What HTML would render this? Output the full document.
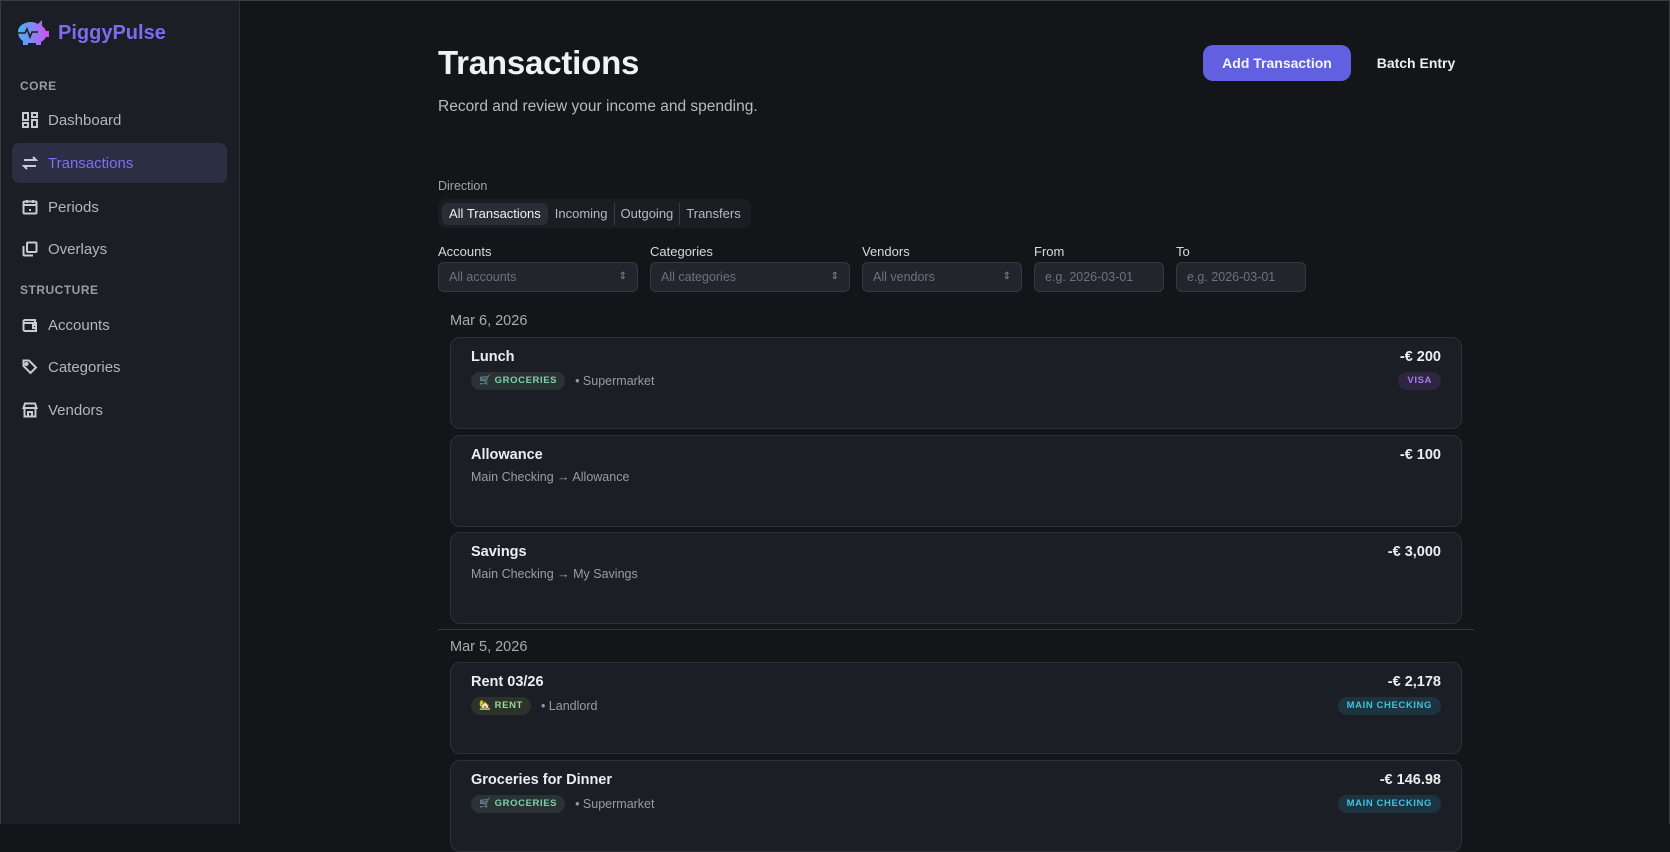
<!DOCTYPE html>
<html><head><meta charset="utf-8"><style>
*{box-sizing:border-box;margin:0;padding:0}
body{width:1670px;height:824px;overflow:hidden;background:#141519;font-family:"Liberation Sans",sans-serif;color:#e6e7ea;position:relative}
.frame{position:absolute;inset:0;border:1px solid #3a3c42;border-bottom:none;pointer-events:none}
.side{position:absolute;left:0;top:0;width:240px;height:824px;background:#1c1e25;border-right:1px solid #2c2e35}
.logo{position:absolute;left:14px;top:18px;display:flex;align-items:center;gap:8px;font-weight:bold;font-size:20px;color:#7b6cf0}
.sec{position:absolute;left:20px;font-size:12px;font-weight:bold;color:#9a9ca4;letter-spacing:.5px}
.nav{position:absolute;left:12px;width:215px;height:40px;display:flex;align-items:center;padding-left:10px;gap:10px;font-size:15px;color:#b4b6bd;border-radius:7px}
.nav.act{background:#2c2e44;color:#7d72ee}
.nav svg{width:16px;height:16px;stroke:#c9cbd1;fill:none;stroke-width:2}
h1{position:absolute;left:438px;top:44px;font-size:33px;font-weight:bold;color:#f0f1f3;letter-spacing:-.2px}
.sub{position:absolute;left:438px;top:98px;font-size:15.5px;color:#b7b9c0}
.btn{position:absolute;top:45px;height:36px;border-radius:10px;font-size:14px;font-weight:bold;display:flex;align-items:center;justify-content:center}
.lbl{position:absolute;font-size:13px;color:#d8d9dd}
.seg{position:absolute;left:438px;top:199px;height:29px;background:#1b1d22;border-radius:7px;display:flex;align-items:center;padding:0 4px;font-size:13px;color:#b8bac0}
.seg span{padding:0 6px;height:22px;line-height:22px;border-right:1px solid #3a3c42}
.seg span.a{background:#2b2d35;color:#f0f0f2;border-radius:6px;border:none;padding:0 7px;margin-right:1px}
.seg span:last-child{border:none}
.inp{position:absolute;top:262px;height:30px;border:1px solid #363943;background:#23252d;border-radius:6px;font-size:12.5px;color:#6e717a;padding-left:10px;line-height:28px}
.inp i{position:absolute;right:10px;top:0;font-style:normal;font-size:10px;color:#888}
.date{position:absolute;left:450px;font-size:14.5px;color:#a9abb2}
.card{position:absolute;left:450px;width:1012px;height:92px;background:#1c1e25;border:1px solid #2e3038;border-radius:10px}
.t{position:absolute;left:20px;top:11px;font-size:14.5px;font-weight:bold;color:#eceef0}
.amt{position:absolute;right:20px;top:11px;font-size:14.5px;font-weight:bold;color:#eceef0}
.m{position:absolute;left:20px;top:34px;font-size:12.5px;color:#9a9ca4;display:flex;align-items:center;gap:10px}
.pill{height:18px;padding:0 8px;border-radius:9px;background:#2a3234;color:#7fcfb0;font-size:9.5px;font-weight:bold;letter-spacing:.6px;line-height:18px}
.tag{position:absolute;right:20px;top:34px;height:18px;padding:0 9px;border-radius:9px;font-size:9.5px;font-weight:bold;letter-spacing:.6px;line-height:18px}
.hr{position:absolute;left:438px;top:629px;width:1036px;height:1px;background:#34363d}
</style></head><body>
<div class="side">
<div class="logo"><svg width="36" height="30" viewBox="0 0 36 30"><defs><linearGradient id="g" x1="0" x2="1"><stop offset="0" stop-color="#3fb6f5"/><stop offset="1" stop-color="#d44ef0"/></linearGradient></defs><path d="M4 14c0-6 6-10 13-10 3 0 5 1 7 2l4-4v6c2 1 3 3 4 5h3v6h-3c-1 2-3 4-5 5v3h-5v-2h-8v2H9v-4c-3-2-5-5-5-9z" fill="url(#g)"/><path d="M3 15h8l2-4 3 8 2-5h6" stroke="#1c1e25" stroke-width="1.6" fill="none"/></svg>PiggyPulse</div>
<div class="sec" style="top:79px">CORE</div>
<div class="nav" style="top:100px"><svg viewBox="0 0 16 16"><rect x="1" y="1" width="5" height="7"/><rect x="10" y="1" width="5" height="4"/><rect x="1" y="11" width="5" height="4"/><rect x="10" y="8" width="5" height="7"/></svg>Dashboard</div>
<div class="nav act" style="top:143px"><svg viewBox="0 0 16 16"><path d="M2 5h12l-3-3M14 11H2l3 3"/></svg>Transactions</div>
<div class="nav" style="top:187px"><svg viewBox="0 0 16 16"><rect x="1.5" y="2.5" width="13" height="12" rx="1"/><path d="M5 1v3M11 1v3M1.5 6h13M8 10v2"/></svg>Periods</div>
<div class="nav" style="top:229px"><svg viewBox="0 0 16 16"><rect x="5" y="1.5" width="9.5" height="9.5" rx="1"/><path d="M11 14.5H2.5a1 1 0 0 1-1-1V5"/></svg>Overlays</div>
<div class="sec" style="top:283px">STRUCTURE</div>
<div class="nav" style="top:305px"><svg viewBox="0 0 16 16"><path d="M13 5V3H3a1.5 1.5 0 0 0 0 3h11v8H3a1.5 1.5 0 0 1-1.5-1.5v-9"/><path d="M14 8h-3v3h3"/></svg>Accounts</div>
<div class="nav" style="top:347px"><svg viewBox="0 0 16 16"><path d="M1.5 2v5l7 7 5.5-5.5-7-7h-5.5z"/><circle cx="4.5" cy="5" r="1"/></svg>Categories</div>
<div class="nav" style="top:390px"><svg viewBox="0 0 16 16"><path d="M1.5 6l1.5-4.5h10L14.5 6zM2.5 6v8.5h11V6M6 14.5V10h4v4.5"/></svg>Vendors</div>
</div>
<h1>Transactions</h1>
<div class="sub">Record and review your income and spending.</div>
<div class="btn" style="left:1203px;width:148px;background:#6060e0;color:#f4f4ff">Add Transaction</div>
<div class="btn" style="left:1366px;width:100px;color:#eceef0">Batch Entry</div>
<div class="lbl" style="left:438px;top:179px;color:#a3a5ac;font-size:12.5px">Direction</div>
<div class="seg"><span class="a">All Transactions</span><span>Incoming</span><span>Outgoing</span><span>Transfers</span></div>
<div class="lbl" style="left:438px;top:244px">Accounts</div>
<div class="lbl" style="left:650px;top:244px">Categories</div>
<div class="lbl" style="left:862px;top:244px">Vendors</div>
<div class="lbl" style="left:1034px;top:244px">From</div>
<div class="lbl" style="left:1176px;top:244px">To</div>
<div class="inp" style="left:438px;width:200px">All accounts<i>⇕</i></div>
<div class="inp" style="left:650px;width:200px">All categories<i>⇕</i></div>
<div class="inp" style="left:862px;width:160px">All vendors<i>⇕</i></div>
<div class="inp" style="left:1034px;width:130px">e.g. 2026-03-01</div>
<div class="inp" style="left:1176px;width:130px">e.g. 2026-03-01</div>
<div class="date" style="top:313px">Mar 6, 2026</div>
<div class="card" style="top:337px"><div class="t">Lunch</div><div class="amt">-€ 200</div><div class="m"><span class="pill">🛒 GROCERIES</span>• Supermarket</div><div class="tag" style="background:#2e2640;color:#a47de8">VISA</div></div>
<div class="card" style="top:435px"><div class="t">Allowance</div><div class="amt">-€ 100</div><div class="m">Main Checking → Allowance</div></div>
<div class="card" style="top:532px"><div class="t">Savings</div><div class="amt">-€ 3,000</div><div class="m">Main Checking → My Savings</div></div>
<div class="hr"></div>
<div class="date" style="top:639px">Mar 5, 2026</div>
<div class="card" style="top:662px"><div class="t">Rent 03/26</div><div class="amt">-€ 2,178</div><div class="m"><span class="pill" style="background:#2b3329;color:#9fd49a">🏡 RENT</span>• Landlord</div><div class="tag" style="background:#1d3440;color:#3fc2e0">MAIN CHECKING</div></div>
<div class="card" style="top:760px"><div class="t">Groceries for Dinner</div><div class="amt">-€ 146.98</div><div class="m"><span class="pill">🛒 GROCERIES</span>• Supermarket</div><div class="tag" style="background:#1d3440;color:#3fc2e0">MAIN CHECKING</div></div>
<div class="frame"></div>
</body></html>
